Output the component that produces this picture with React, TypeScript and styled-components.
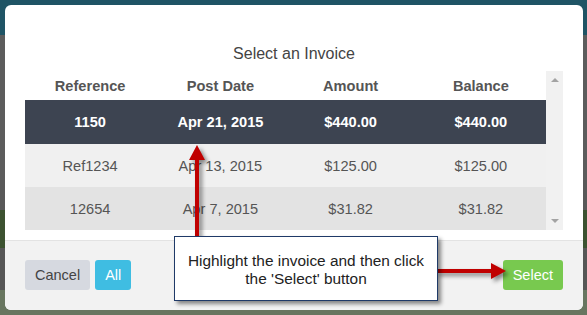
import React from "react";
import styled, { createGlobalStyle } from "styled-components";

const GlobalStyle = createGlobalStyle`
  html, body { margin: 0; padding: 0; }
  body {
    width: 587px;
    height: 315px;
    overflow: hidden;
    font-family: "Liberation Sans", Arial, sans-serif;
  }
`;

const Page = styled.div`
  position: relative;
  width: 587px;
  height: 315px;
  display: flex;
  flex-direction: column;
  overflow: hidden;
`;

const Stripe = styled.div<{ $h: number; $c: string }>`
  height: ${(p) => p.$h}px;
  background: ${(p) => p.$c};
  flex: none;
`;

const Modal = styled.div`
  position: absolute;
  left: 5px;
  top: 5px;
  width: 578px;
  height: 305px;
  background: #fff;
  border-radius: 6px;
  overflow: hidden;
  display: flex;
  flex-direction: column;
`;

const Body = styled.div`
  padding: 39px 20px 10px;
  display: flex;
  flex-direction: column;
`;

const Title = styled.div`
  font-size: 16px;
  line-height: 20px;
  height: 27px;
  color: #444;
  text-align: center;
`;

const TableArea = styled.div`
  display: flex;
  height: 159px;
`;

const Table = styled.div`
  flex: 1;
  display: flex;
  flex-direction: column;
`;

const Row = styled.div<{ $h: number; $bg: string; $selected?: boolean; $bold?: boolean }>`
  display: grid;
  grid-template-columns: repeat(4, 1fr);
  align-items: center;
  height: ${(p) => p.$h}px;
  background: ${(p) => p.$bg};
  color: ${(p) => (p.$selected ? "#fff" : "#555")};
  font-weight: ${(p) => (p.$bold ? 700 : 400)};
  font-size: 14.6px;
`;

const Cell = styled.div`
  text-align: center;
`;

const Scrollbar = styled.div`
  width: 17px;
  background: #f1f1f1;
  display: flex;
  flex-direction: column;
  justify-content: space-between;
  align-items: center;
  padding: 7px 0 7px;
  box-sizing: border-box;
`;

const ScrollArrow = styled.div<{ $down?: boolean }>`
  width: 0;
  height: 0;
  border-left: 4px solid transparent;
  border-right: 4px solid transparent;
  ${(p) =>
    p.$down
      ? "border-top: 4px solid #a3a3a3;"
      : "border-bottom: 4px solid #a3a3a3;"}
`;

const Footer = styled.div`
  flex: 1;
  border-top: 1px solid #e3e3e3;
  background: #f2f2f2;
  padding: 19px 20px;
  display: flex;
  justify-content: space-between;
  align-items: flex-start;
`;

const ButtonGroup = styled.div`
  display: flex;
  gap: 5px;
`;

const Button = styled.button<{ $bg: string; $fg: string }>`
  height: 30px;
  padding: 0 10px;
  border: none;
  border-radius: 3px;
  background: ${(p) => p.$bg};
  color: ${(p) => p.$fg};
  font-family: "Liberation Sans", Arial, sans-serif;
  font-size: 14.5px;
  line-height: 30px;
`;

const Callout = styled.div`
  position: absolute;
  left: 174px;
  top: 236px;
  width: 264px;
  height: 65px;
  box-sizing: border-box;
  border: 1px solid #1f3a68;
  background: #fff;
  box-shadow: 3px 3px 4px rgba(0, 0, 0, 0.45);
  padding-top: 15px;
  text-align: center;
  font-size: 15.4px;
  line-height: 18px;
  color: #222;
  white-space: nowrap;
`;

const ArrowSvg = styled.svg`
  position: absolute;
  left: 0;
  top: 0;
  pointer-events: none;
  overflow: visible;
`;

const rows = [
  { ref: "1150", date: "Apr 21, 2015", amount: "$440.00", balance: "$440.00", h: 44, bg: "#3d4451", selected: true },
  { ref: "Ref1234", date: "Apr 13, 2015", amount: "$125.00", balance: "$125.00", h: 43, bg: "#f0f0f0" },
  { ref: "12654", date: "Apr 7, 2015", amount: "$31.82", balance: "$31.82", h: 43, bg: "#e3e3e3" },
];

export default function App() {
  return (
    <>
      <GlobalStyle />
      <Page>
        <Stripe $h={35} $c="#1f5465" />
        <Stripe $h={145} $c="#5c5c5c" />
        <Stripe $h={30} $c="#585858" />
        <Stripe $h={38} $c="#3c5230" />
        <Stripe $h={42} $c="#565656" />
        <Stripe $h={25} $c="#687660" />

        <Modal>
          <Body>
            <Title>Select an Invoice</Title>
            <TableArea>
              <Table>
                <Row $h={29} $bg="#fff" $bold>
                  <Cell>Reference</Cell>
                  <Cell>Post Date</Cell>
                  <Cell>Amount</Cell>
                  <Cell>Balance</Cell>
                </Row>
                {rows.map((r) => (
                  <Row key={r.ref} $h={r.h} $bg={r.bg} $selected={r.selected} $bold={r.selected}>
                    <Cell>{r.ref}</Cell>
                    <Cell>{r.date}</Cell>
                    <Cell>{r.amount}</Cell>
                    <Cell>{r.balance}</Cell>
                  </Row>
                ))}
              </Table>
              <Scrollbar>
                <ScrollArrow />
                <ScrollArrow $down />
              </Scrollbar>
            </TableArea>
          </Body>
          <Footer>
            <ButtonGroup>
              <Button $bg="#d6d9e0" $fg="#444">Cancel</Button>
              <Button $bg="#3fbde2" $fg="#fff">All</Button>
            </ButtonGroup>
            <Button $bg="#78c94f" $fg="#fff">Select</Button>
          </Footer>
        </Modal>

        <ArrowSvg width="587" height="315" viewBox="0 0 587 315">
          <g style={{ filter: "drop-shadow(3px 3px 2px rgba(0,0,0,0.45))" }}>
            <rect x="195" y="158" width="4" height="80" fill="#c00000" />
            <polygon points="197,145 205,160 189,160" fill="#c00000" />
            <rect x="436" y="269" width="57" height="4" fill="#c00000" />
            <polygon points="491,263 506,271 491,279" fill="#c00000" />
          </g>
        </ArrowSvg>

        <Callout>
          Highlight the invoice and then click
          <br />
          the 'Select' button
        </Callout>
      </Page>
    </>
  );
}
